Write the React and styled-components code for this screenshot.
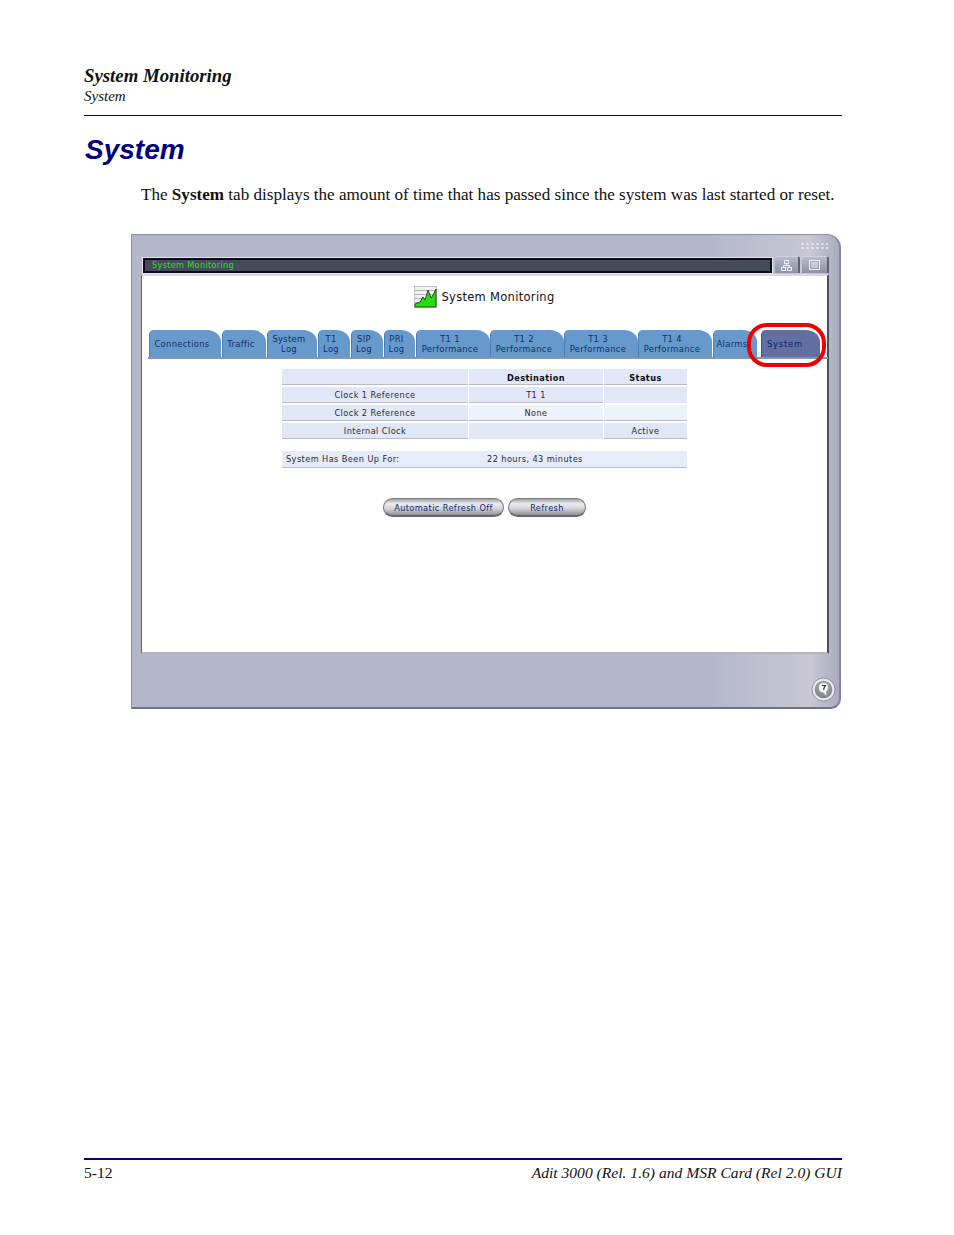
import React from 'react'
import styled, { createGlobalStyle } from 'styled-components'

const Global = createGlobalStyle`
  html, body { margin: 0; padding: 0; background: #fff; }
`
const Page = styled.div`
  box-sizing: border-box;
  width: 954px;
  height: 1235px;
  padding: 65px 112px 0 84px;
  display: flex;
  flex-direction: column;
  font-family: "Liberation Serif", serif;
  color: #111;
`
const Chapter = styled.div`
  font-size: 18.8px;
  line-height: 22px;
  font-weight: 700;
  font-style: italic;
`
const Section = styled.div`
  margin-top: 1px;
  font-size: 15px;
  line-height: 17px;
  font-style: italic;
  padding-bottom: 10px;
  border-bottom: 1px solid #000050;
`
const Title = styled.h1`
  margin: 14px 0 0 1px;
  font-family: "Liberation Sans", sans-serif;
  font-size: 28px;
  line-height: 40px;
  font-weight: 700;
  font-style: italic;
  color: #000080;
`
const Intro = styled.p`
  margin: 15px 0 0 57px;
  font-size: 17.1px;
  line-height: 20px;
  white-space: nowrap;
`
const Win = styled.div`
  position: relative;
  box-sizing: border-box;
  align-self: flex-end;
  width: 710px;
  height: 475px;
  margin: 29px 1px 0 0;
  padding: 21px 10px 0 9px;
  display: flex;
  flex-direction: column;
  background: linear-gradient(90deg, #b4b7cb 0, #b4b7cb 82%, #c8c7d3 96%, #aaacbe 100%);
  border-top: 1px solid #8e91a3;
  border-left: 1px solid #8e91a3;
  border-bottom: 2px solid #6f7284;
  border-right: 2px solid #84879a;
  border-radius: 0 14px 10px 0;
  font-family: "DejaVu Sans", sans-serif;
`
const Grip = styled.div`
  position: absolute;
  top: 7px;
  right: 11px;
  width: 28px;
  height: 7px;
  background: radial-gradient(circle, #e8e9f0 1px, transparent 1.3px) 0 0 / 5px 4px;
`
const TitleRow = styled.div`
  display: flex;
  align-items: flex-end;
  height: 17px;
  margin-bottom: 1px;
  padding-left: 2px;
  gap: 2px;
`
const StatusBar = styled.div`
  box-sizing: border-box;
  flex: 1;
  height: 15px;
  margin-right: 1px;
  background: #454b5a;
  border: 2px solid #0c0c14;
  outline: 1px solid #e4e5ee;
  padding-left: 7px;
  color: #22e022;
  font-size: 8.2px;
  line-height: 11px;
  letter-spacing: 0.3px;
  white-space: nowrap;
`
const WinButton = styled.div`
  box-sizing: border-box;
  flex: none;
  width: ${p => p.$w}px;
  height: 17px;
  display: flex;
  align-items: center;
  justify-content: center;
  background: linear-gradient(#b9bbcb, #8d90a3);
  border-top: 1px solid #d2d3de;
  border-right: 2px solid #60636f;
  border-radius: 3px 3px 0 0;
`
const Content = styled.div`
  box-sizing: border-box;
  height: 380px;
  background: #fff;
  border-top: 2px solid #d7d8e2;
  border-left: 1px solid #5f6273;
  border-right: 2px solid #4b4e5e;
  border-bottom: 2px solid #b4b4bc;
  display: flex;
  flex-direction: column;
  align-items: center;
`
const Heading = styled.div`
  display: flex;
  align-items: center;
  gap: 4px;
  margin-top: 9px;
  height: 24px;
  font-size: 11.5px;
  letter-spacing: 0.3px;
  color: #111;
`
const TabRow = styled.div`
  align-self: flex-start;
  box-sizing: border-box;
  display: flex;
  align-items: flex-end;
  width: 680px;
  height: 29px;
  margin: 21px 0 0 6px;
  padding-left: 1px;
  border-bottom: 2px solid #8f93a8;
`
const Tab = styled.div`
  box-sizing: border-box;
  flex: none;
  width: ${p => p.$w}px;
  margin-right: ${p => p.$gap}px;
  height: 27px;
  padding-right: ${p => (p.$active ? 12 : 7)}px;
  display: flex;
  align-items: center;
  justify-content: center;
  overflow: hidden;
  text-align: center;
  white-space: pre-line;
  font-size: 8.4px;
  line-height: 10px;
  letter-spacing: ${p => (p.$active ? 0.8 : 0.3)}px;
  color: ${p => (p.$active ? '#0a1f70' : '#10306a')};
  background: ${p => (p.$active ? '#636fa0' : '#6699cc')};
  border-left: 1px solid ${p => (p.$active ? '#46507f' : '#4f7fae')};
  border-radius: 5px 14px 0 0 / 5px 12px 0 0;
`
const Grid = styled.div`
  display: grid;
  grid-template-columns: 186px 134px 83px;
  column-gap: 1px;
  row-gap: 2px;
  width: 405px;
  margin-top: 10px;
`
const Cell = styled.div`
  height: 16px;
  box-sizing: border-box;
  font-size: 8.2px;
  line-height: ${p => (p.$head ? 18 : 17)}px;
  letter-spacing: 0.42px;
  text-align: center;
  white-space: nowrap;
  font-weight: ${p => (p.$head ? 700 : 400)};
  color: ${p => (p.$head ? '#0c0c14' : '#2a2a33')};
  background: ${p => (p.$light ? '#eef2fb' : '#e1e7f7')};
  border-bottom: 1px solid ${p => (p.$flat ? 'transparent' : '#b9bcc7')};
`
const Uptime = styled.div`
  box-sizing: border-box;
  width: 405px;
  height: 17px;
  margin-top: 12px;
  padding-left: 4px;
  display: flex;
  background: #e6ebf8;
  border-bottom: 1px solid #b9bcc7;
  font-size: 8.2px;
  line-height: 17px;
  letter-spacing: 0.42px;
  color: #2a2a33;
`
const UptimeLabel = styled.span`
  width: 201px;
`
const Buttons = styled.div`
  display: flex;
  gap: 4px;
  margin-top: 30px;
`
const Pill = styled.div`
  box-sizing: border-box;
  width: ${p => p.$w}px;
  height: 19px;
  border-radius: 10px;
  border: 1px solid #7a7a80;
  border-bottom: 2px solid #66666c;
  background: linear-gradient(#a0a0a6 0, #ececee 30%, #d4d4d8 60%, #8e8e94 100%);
  color: #102a70;
  font-size: 8.2px;
  line-height: 18px;
  letter-spacing: 0.4px;
  text-align: center;
  white-space: nowrap;
`
const Bottom = styled.div`
  flex: 1;
  display: flex;
  justify-content: flex-end;
  align-items: flex-end;
  margin-right: -7px;
  padding-bottom: 5px;
`
const Marker = styled.div`
  position: absolute;
  left: 615px;
  top: 88px;
  width: 79px;
  height: 44px;
  box-sizing: border-box;
  border: 4px solid #ee0000;
  border-radius: 20px;
`
const PageFoot = styled.div`
  margin-top: auto;
  margin-bottom: 53px;
  padding-top: 4px;
  display: flex;
  justify-content: space-between;
  border-top: 2px solid #000080;
  font-size: 15.6px;
  line-height: 18px;
`
const Manual = styled.span`
  font-style: italic;
`

const tabs = [
  ['Connections', 72, 1], ['Traffic', 44, 1], ['System\nLog', 50, 1], ['T1\nLog', 32, 1],
  ['SIP\nLog', 32, 1], ['PRI\nLog', 31, 1], ['T1 1\nPerformance', 74, 0], ['T1 2\nPerformance', 74, 0],
  ['T1 3\nPerformance', 74, 0], ['T1 4\nPerformance', 74, 1], ['Alarms', 44, 4],
]

const rows = [
  ['Clock 1 Reference', 'T1 1', ''],
  ['Clock 2 Reference', 'None', ''],
  ['Internal Clock', '', 'Active'],
]

function ChartIcon() {
  return (
    <svg width="23" height="22" viewBox="0 0 23 22">
      <rect width="23" height="22" fill="#f2f2f2" stroke="#9a9a9a" />
      <path d="M0 4.5H23M0 8.5H23M0 12.5H23M0 16.5H23" stroke="#b5b5b5" />
      <path d="M1 21V18L6 16L9 11L11 14L14 4L17 12L19 9L22 3V21Z" fill="#22e010" stroke="#222" strokeWidth="0.8" />
    </svg>
  )
}

function NetIcon() {
  return (
    <svg width="11" height="11" viewBox="0 0 11 11" fill="none" stroke="#eef0f6">
      <rect x="3.5" y="0.5" width="4" height="3" />
      <rect x="0.5" y="7.5" width="4" height="3" />
      <rect x="6.5" y="7.5" width="4" height="3" />
      <path d="M5.5 3.5V5.5M2.5 7.5V5.5H8.5V7.5" />
    </svg>
  )
}

function ListIcon() {
  return (
    <svg width="11" height="10" viewBox="0 0 11 10" fill="none" stroke="#eef0f6">
      <rect x="0.5" y="0.5" width="10" height="9" />
      <path d="M2 3H9M2 5H9M2 7H9" />
    </svg>
  )
}

function HelpIcon() {
  return (
    <svg width="25" height="25" viewBox="0 0 25 25">
      <defs>
        <radialGradient id="helpFill" cx="50%" cy="35%" r="70%">
          <stop offset="0" stopColor="#b9b9c0" />
          <stop offset="1" stopColor="#77777f" />
        </radialGradient>
      </defs>
      <circle cx="12.5" cy="12.5" r="11.5" fill="#e9e9ee" stroke="#8d8f9c" />
      <circle cx="12.5" cy="12.5" r="8.8" fill="url(#helpFill)" />
      <path d="M8 10C8 7 10 6 12.5 6S17 7 17 10S16 13.5 15 14.5L15.5 19L12 15H10C8.5 14 8 12 8 10Z" fill="#f7f7f7" />
      <path d="M10.8 8.5H14.4L12.8 11.5V13" fill="none" stroke="#333" strokeWidth="1.2" />
    </svg>
  )
}

export default function App() {
  return (
    <Page>
      <Global />
      <Chapter>System Monitoring</Chapter>
      <Section>System</Section>
      <Title>System</Title>
      <Intro>The <b>System</b> tab displays the amount of time that has passed since the system was last started or reset.</Intro>
      <Win>
        <Grip />
        <TitleRow>
          <StatusBar>System Monitoring</StatusBar>
          <WinButton $w={25}><NetIcon /></WinButton>
          <WinButton $w={27}><ListIcon /></WinButton>
        </TitleRow>
        <Content>
          <Heading><ChartIcon />System Monitoring</Heading>
          <TabRow>
            {tabs.map(([label, w, gap]) => <Tab key={label} $w={w} $gap={gap}>{label}</Tab>)}
            <Tab $w={59} $gap={0} $active>System</Tab>
          </TabRow>
          <Grid>
            <Cell $head />
            <Cell $head>Destination</Cell>
            <Cell $head>Status</Cell>
            {rows.map(([name, dest, status], i) => (
              <React.Fragment key={name}>
                <Cell>{name}</Cell>
                <Cell $light={i === 1} $flat={dest === ''}>{dest}</Cell>
                <Cell $light={i === 1} $flat={i === 0}>{status}</Cell>
              </React.Fragment>
            ))}
          </Grid>
          <Uptime><UptimeLabel>System Has Been Up For:</UptimeLabel>22 hours, 43 minutes</Uptime>
          <Buttons>
            <Pill $w={121}>Automatic Refresh Off</Pill>
            <Pill $w={78}>Refresh</Pill>
          </Buttons>
        </Content>
        <Bottom><HelpIcon /></Bottom>
        <Marker />
      </Win>
      <PageFoot>
        <span>5-12</span>
        <Manual>Adit 3000 (Rel. 1.6) and MSR Card (Rel 2.0) GUI</Manual>
      </PageFoot>
    </Page>
  )
}
